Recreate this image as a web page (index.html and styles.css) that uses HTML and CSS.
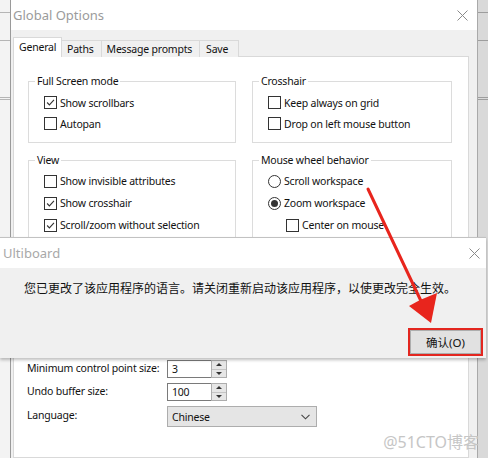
FILE: index.html
```html
<!DOCTYPE html>
<html>
<head>
<meta charset="utf-8">
<link rel="stylesheet" href="styles.css">
</head>
<body>
<div class="screen">
  <div class="side-left">
    <div class="sl-line l1"></div>
    <div class="sl-line l2"></div>
    <div class="sl-line l3"></div>
    <div class="sl-line l4"></div>
  </div>
  <div class="window">
    <div class="titlebar">
      <span class="title">Global Options</span>
      <svg class="close" width="11" height="11" viewBox="0 0 11 11"><path d="M0.5 0.5L10.5 10.5M10.5 0.5L0.5 10.5" stroke="#8a8a8a" stroke-width="1"/></svg>
    </div>
    <div class="client">
      <div class="tabs">
        <div class="tab active">General</div>
        <div class="tab">Paths</div>
        <div class="tab">Message prompts</div>
        <div class="tab save">Save</div>
      </div>
      <div class="panel">
        <div class="groups">
          <fieldset class="group g-left">
            <legend>Full Screen mode</legend>
            <div class="opt"><span class="cb on"><svg viewBox="0 0 13 13"><path d="M2.5 6.5L5.2 9.3L10.6 3.4" fill="none" stroke="#333" stroke-width="1.3"/></svg></span>Show scrollbars</div>
            <div class="opt"><span class="cb"></span>Autopan</div>
          </fieldset>
          <fieldset class="group g-right">
            <legend>Crosshair</legend>
            <div class="opt"><span class="cb"></span>Keep always on grid</div>
            <div class="opt"><span class="cb"></span>Drop on left mouse button</div>
          </fieldset>
          <fieldset class="group g-left tall">
            <legend>View</legend>
            <div class="opt"><span class="cb"></span>Show invisible attributes</div>
            <div class="opt"><span class="cb on"><svg viewBox="0 0 13 13"><path d="M2.5 6.5L5.2 9.3L10.6 3.4" fill="none" stroke="#333" stroke-width="1.3"/></svg></span>Show crosshair</div>
            <div class="opt"><span class="cb on"><svg viewBox="0 0 13 13"><path d="M2.5 6.5L5.2 9.3L10.6 3.4" fill="none" stroke="#333" stroke-width="1.3"/></svg></span>Scroll/zoom without selection</div>
          </fieldset>
          <fieldset class="group g-right tall">
            <legend>Mouse wheel behavior</legend>
            <div class="opt"><span class="rb"></span>Scroll workspace</div>
            <div class="opt"><span class="rb on"></span>Zoom workspace</div>
            <div class="opt indent"><span class="cb"></span>Center on mouse</div>
          </fieldset>
        </div>
        <div class="form">
          <div class="lbl">Minimum control point size:</div>
          <div class="spin"><div class="spin-input">3</div><div class="spin-btns"><span class="up"></span><span class="down"></span></div></div>
          <div class="lbl">Undo buffer size:</div>
          <div class="spin"><div class="spin-input">100</div><div class="spin-btns"><span class="up"></span><span class="down"></span></div></div>
          <div class="lbl">Language:</div>
          <div class="select"><span>Chinese</span><svg width="9" height="6" viewBox="0 0 9 6"><path d="M0.5 0.8L4.5 4.8L8.5 0.8" fill="none" stroke="#444" stroke-width="1.1"/></svg></div>
        </div>
      </div>
    </div>
  </div>
  <div class="side-right">
    <div class="sr-line r1"></div>
    <div class="sr-line r2"></div>
    <div class="sr-line r3"></div>
    <div class="sr-line r4"></div>
  </div>
</div>

<div class="msgbox">
  <div class="mb-title">
    <span class="mb-name">Ultiboard</span>
    <svg class="close" width="11" height="11" viewBox="0 0 11 11"><path d="M0.5 0.5L10.5 10.5M10.5 0.5L0.5 10.5" stroke="#8a8a8a" stroke-width="1"/></svg>
  </div>
  <div class="mb-body">
    <div class="mb-text">您已更改了该应用程序的语言。请关闭重新启动该应用程序，以使更改完全生效。</div>
    <div class="mb-actions"><div class="btn">确认(O)</div></div>
  </div>
</div>

<svg class="arrow" width="488" height="458" viewBox="0 0 488 458">
  <line x1="368" y1="189" x2="421" y2="301" stroke="#e8251d" stroke-width="3" stroke-linecap="round"/>
  <polygon points="431,323 409,306 420,300 437,293" fill="#e8251d"/>
</svg>

<div class="watermark">@51CTO博客</div>
</body>
</html>
```

FILE: styles.css
```css
* { box-sizing: border-box; }
body {
  margin: 0;
  width: 488px;
  height: 458px;
  overflow: hidden;
  position: relative;
  font-family: "Noto Sans", "Noto Sans CJK SC", sans-serif;
  font-size: 10.5px;
  letter-spacing: -0.2px;
  color: #111;
  background: #f0f0f0;
}
.screen { display: flex; height: 458px; }

.side-left {
  width: 11px;
  background: #f3f3f3;
  border-right: 1px solid #9a9a9a;
  position: relative;
}
.sl-line { position: absolute; left: 0; width: 10px; height: 1px; background: #b5b5b5; }
.l1 { top: 12px; } .l2 { top: 40px; } .l3 { top: 97px; } .l4 { top: 99px; }

.side-right {
  width: 11px;
  background: #d9d9d9;
  border-left: 1px solid #a9a9a9;
  position: relative;
}
.sr-line { position: absolute; left: 0; width: 11px; height: 1px; background: #9d9d9d; }
.r1 { top: 12px; } .r2 { top: 40px; } .r3 { top: 97px; } .r4 { top: 99px; }

.window {
  width: 466px;
  display: flex;
  flex-direction: column;
  background: #f0f0f0;
}
.titlebar {
  height: 30px;
  background: #fff;
  display: flex;
  align-items: center;
  justify-content: space-between;
  padding: 0 9px 0 2px;
}
.title { font-size: 13px; letter-spacing: 0; color: #9b9b9b; }

.client { flex: 1; display: flex; flex-direction: column; padding: 7px 8px 0 2px; }
.tabs { display: flex; align-items: flex-end; height: 20px; position: relative; z-index: 1; }
.tab {
  height: 17px;
  line-height: 16px;
  padding: 0 7px 0 5px;
  border: 1px solid #d9d9d9;
  border-bottom: none;
  background: #f0f0f0;
  margin-left: -1px;
  white-space: nowrap;
}
.tab.save { width: 40px; padding-left: 6px; }
.tab.active {
  width: 49px;
  height: 20px;
  line-height: 18px;
  margin-left: 0;
  padding: 0 0 0 5px;
  background: #fff;
  border-color: #d9d9d9;
}
.panel {
  flex: 1;
  margin-top: -1px;
  background: #fff;
  border: 1px solid #d9d9d9;
  padding: 16px 0 0 14px;
}

.groups {
  display: grid;
  grid-template-columns: 208px 200px;
  column-gap: 16px;
  row-gap: 9px;
  align-items: start;
}
.group {
  margin: 0;
  min-width: 0;
  border: 1px solid #dcdcdc;
  padding: 3px 0 8px 15px;
}
.group legend {
  padding: 0 2px;
  margin-left: -9px;
  line-height: 16px;
}
.opt { display: flex; align-items: center; gap: 3px; height: 21px; white-space: nowrap; }
.group.tall { padding-top: 2px; }
.group.tall .opt { height: 22px; }
.opt.indent { padding-left: 18px; }

.cb {
  width: 13px;
  height: 13px;
  border: 1px solid #333;
  background: #fff;
  flex: none;
  display: block;
}
.cb svg { display: block; width: 11px; height: 11px; }
.rb {
  width: 13px;
  height: 13px;
  border: 1px solid #333;
  border-radius: 50%;
  background: #fff;
  flex: none;
  display: flex;
  align-items: center;
  justify-content: center;
}
.rb.on::after {
  content: "";
  width: 7px;
  height: 7px;
  border-radius: 50%;
  background: #333;
}

.form {
  margin: 115px 0 0 -1px;
  display: grid;
  grid-template-columns: 140px auto;
  grid-template-rows: 18px 18px 21px;
  row-gap: 5px;
  align-items: center;
}
.lbl { line-height: 16px; margin-top: -3px; white-space: nowrap; }
.spin { display: flex; width: 60px; height: 18px; }
.spin-input {
  width: 44px;
  border: 1px solid #7a7a7a;
  border-right: none;
  background: #fff;
  padding-left: 4px;
  line-height: 16px;
}
.spin-btns {
  width: 16px;
  border: 1px solid #adadad;
  background: #e6e6e6;
  display: flex;
  flex-direction: column;
}
.spin-btns span { flex: 1; display: flex; align-items: center; justify-content: center; }
.spin-btns .up { border-bottom: 1px solid #c4c4c4; }
.spin-btns .up::after { content: ""; border-left: 3px solid transparent; border-right: 3px solid transparent; border-bottom: 3px solid #333; }
.spin-btns .down::after { content: ""; border-left: 3px solid transparent; border-right: 3px solid transparent; border-top: 3px solid #333; }
.select {
  width: 150px;
  height: 21px;
  border: 1px solid #adadad;
  background: #e5e5e5;
  display: flex;
  align-items: center;
  justify-content: space-between;
  padding: 0 6px 0 4px;
}

.msgbox {
  position: absolute;
  left: 0;
  top: 237px;
  width: 486px;
  height: 121px;
  border-top: 1px solid #c2c2c2;
  box-shadow: 0 2px 3px rgba(0, 0, 0, 0.25);
  display: flex;
  flex-direction: column;
  letter-spacing: 0;
}
.mb-title {
  height: 30px;
  background: #fff;
  display: flex;
  align-items: center;
  justify-content: space-between;
  padding: 0 6px 0 3px;
}
.mb-name { font-size: 13px; color: #a8a8a8; }
.mb-body {
  flex: 1;
  background: #f0f0f0;
  padding: 10px 5px 0 24px;
  display: flex;
  flex-direction: column;
}
.mb-text { line-height: 20px; font-family: "Noto Sans CJK SC", sans-serif; font-size: 12px; color: #111; white-space: nowrap; }
.mb-actions { display: flex; justify-content: flex-end; margin-top: 32px; }
.btn {
  width: 71px;
  height: 24px;
  border: 1px solid #adadad;
  background: #e1e1e1;
  display: flex;
  align-items: center;
  justify-content: center;
  font-size: 11.5px;
  outline: 2px solid #e3261f;
  outline-offset: 0;
}

.arrow { position: absolute; left: 0; top: 0; pointer-events: none; }
.watermark {
  position: absolute;
  right: 9px;
  top: 429px;
  font-size: 16px;
  letter-spacing: 0;
  color: #c6c6c6;
}
```
